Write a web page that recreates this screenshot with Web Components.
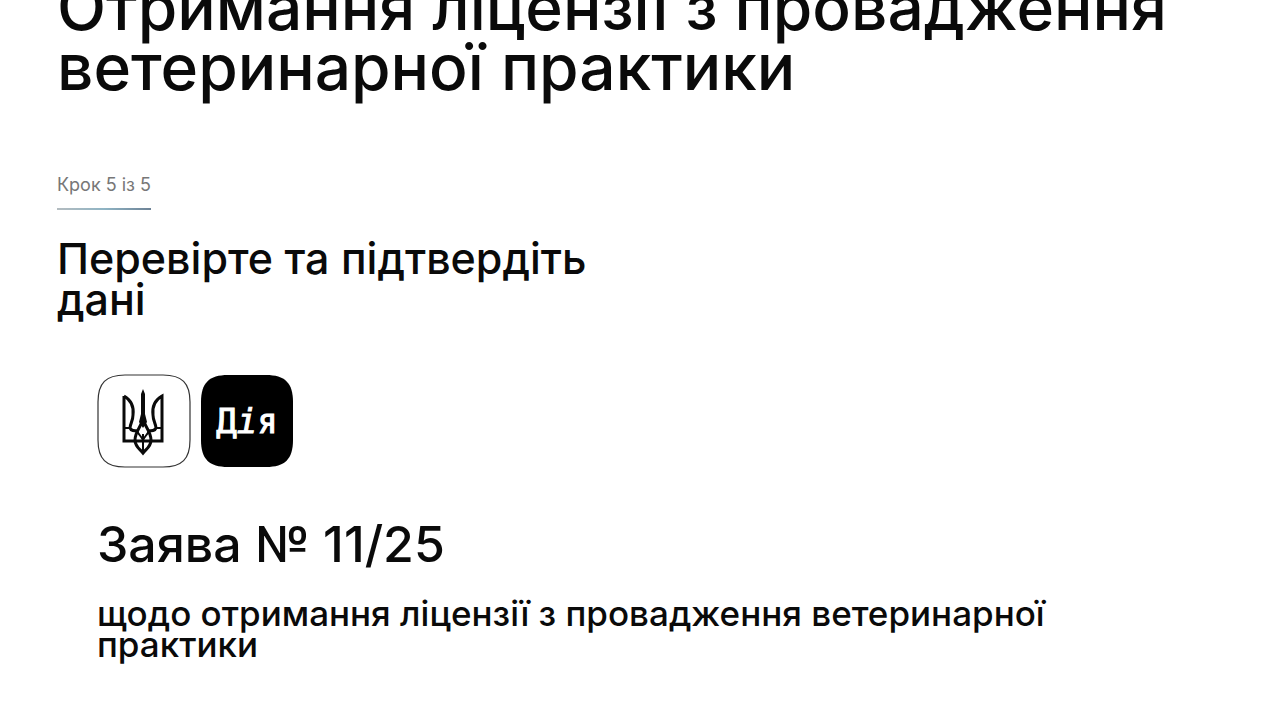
<!DOCTYPE html>
<html lang="uk">
<head>
<meta charset="utf-8">
<meta name="viewport" content="width=device-width, initial-scale=1">
<title>Отримання ліцензії</title>
<style>
    body{
        margin: 0;
        background-color: #fff;
        color: #0a0a0a;
        font-family: Inter, "Liberation Sans", sans-serif;
        font-weight: 500;
    }
</style>
</head>
<body>
<service-page>
    <span slot="title">Отримання ліцензії з провадження ветеринарної практики</span>
    <step-label slot="step">Крок 5 із 5</step-label>
    <span slot="subtitle">Перевірте та підтвердіть дані</span>
    <application-card>
        <trident-logo slot="logos"></trident-logo>
        <diia-logo slot="logos"><span>Д<i>і</i>я</span></diia-logo>
        <span slot="number">Заява № 11/25</span>
        <span slot="about">щодо отримання ліцензії з провадження ветеринарної практики</span>
    </application-card>
</service-page>

<script>
class baseElement extends HTMLElement{
    constructor(){
        super();
        this.attachShadow({mode: "open"});
    }

    connectedCallback(){
        const template = document.createElement('template');
        template.innerHTML = this.getTemplate() + this.getStyle();
        this.shadowRoot.replaceChildren(template.content.cloneNode(true));
    }
}

class servicePage extends baseElement{
    getTemplate(){
        return `
            <main>
                <h1><slot name="title"></slot></h1>
                <slot name="step"></slot>
                <h2><slot name="subtitle"></slot></h2>
                <slot></slot>
            </main>
        `;
    }

    getStyle(){
        return `
            <style>
                :host{
                    display: block;
                    overflow: hidden;
                }

                /* the page is scrolled a little past the top of the title */
                main{
                    display: flex;
                    flex-direction: column;
                    align-items: flex-start;
                    margin-top: -23px;
                    padding: 0 57px 48px;
                }

                h1, h2{
                    margin: 0;
                    font-weight: 500;
                }

                h1{
                    margin-bottom: 76px;
                    font-size: 64px;
                    line-height: 60px;
                }

                h2{
                    max-width: 560px;
                    margin: 28px 0 54px;
                    font-size: 43px;
                    line-height: 41px;
                }
            </style>
        `;
    }
}

class stepLabel extends baseElement{
    getTemplate(){
        return `<p><slot></slot></p><div></div>`;
    }

    getStyle(){
        return `
            <style>
                :host{
                    display: block;
                }

                p{
                    margin: 0 0 11px;
                    color: #777;
                    font-size: 18px;
                    font-weight: 400;
                    line-height: 24px;
                }

                div{
                    height: 2px;
                    background: linear-gradient(90deg, #b4bcc0, #8fb4c4 50%, #6d8296);
                }
            </style>
        `;
    }
}

class applicationCard extends baseElement{
    getTemplate(){
        return `
            <section>
                <div><slot name="logos"></slot></div>
                <h3><slot name="number"></slot></h3>
                <p><slot name="about"></slot></p>
            </section>
        `;
    }

    getStyle(){
        return `
            <style>
                :host{
                    display: block;
                    padding: 0 40px;
                }

                div{
                    display: flex;
                    gap: 9px;
                }

                h3{
                    margin: 44px 0 22px;
                    font-size: 50px;
                    font-weight: 500;
                    line-height: 64px;
                }

                p{
                    max-width: 1000px;
                    margin: 0;
                    font-size: 35px;
                    line-height: 31px;
                }
            </style>
        `;
    }
}

class tridentLogo extends baseElement{
    getTemplate(){
        return `
            <svg viewBox="0 0 94 94" role="img" aria-label="Тризуб">
                <path d="M28 1H66C85 1 93 9 93 28V66C93 85 85 93 66 93H28C9 93 1 85 1 66V28C1 9 9 1 28 1Z" fill="#fff" stroke="#333" stroke-width="1.2"/>
                <g fill="none" stroke="#0a0a0a" stroke-width="3">
                    <path d="M27 22V67H65V22C58 26 55 33 56 41C56 47 59 50 59 54C58 57 55 57 51 57"/>
                    <path d="M27 22C34 26 37 33 36 41C36 47 33 50 33 54C34 57 37 57 41 57"/>
                    <path d="M27 54H33M59 54H65" stroke-width="2"/>
                    <path d="M46 44C45 52 38 57 38 66C38 73 43 75 46 79C49 75 54 73 54 66C54 57 47 52 46 44Z"/>
                    <path d="M46 60V78M40 57C42 61 44 62 46 66C48 62 50 61 52 57" stroke-width="2"/>
                </g>
                <path d="M46 15L48 20 48 40 50 48 46 54 42 48 44 40 44 20Z" fill="#0a0a0a"/>
            </svg>
        `;
    }

    getStyle(){
        return `
            <style>
                :host, svg{
                    display: block;
                    width: 94px;
                    height: 94px;
                }
            </style>
        `;
    }
}

class diiaLogo extends baseElement{
    getTemplate(){
        return `
            <svg viewBox="0 0 94 94" aria-hidden="true">
                <path d="M28 1H66C85 1 93 9 93 28V66C93 85 85 93 66 93H28C9 93 1 85 1 66V28C1 9 9 1 28 1Z"/>
            </svg>
            <slot></slot>
        `;
    }

    getStyle(){
        return `
            <style>
                :host{
                    display: grid;
                    place-items: center;
                    width: 94px;
                    height: 94px;
                    color: #fff;
                    font-family: "DejaVu Sans Mono", monospace;
                    font-size: 34px;
                    font-weight: 400;
                    line-height: 40px;
                    -webkit-text-stroke: 1px #fff;
                }

                svg, ::slotted(span){
                    grid-area: 1 / 1;
                }

                svg{
                    width: 94px;
                    height: 94px;
                }
            </style>
        `;
    }
}

customElements.define("service-page", servicePage);
customElements.define("step-label", stepLabel);
customElements.define("application-card", applicationCard);
customElements.define("trident-logo", tridentLogo);
customElements.define("diia-logo", diiaLogo);
</script>
</body>
</html>
